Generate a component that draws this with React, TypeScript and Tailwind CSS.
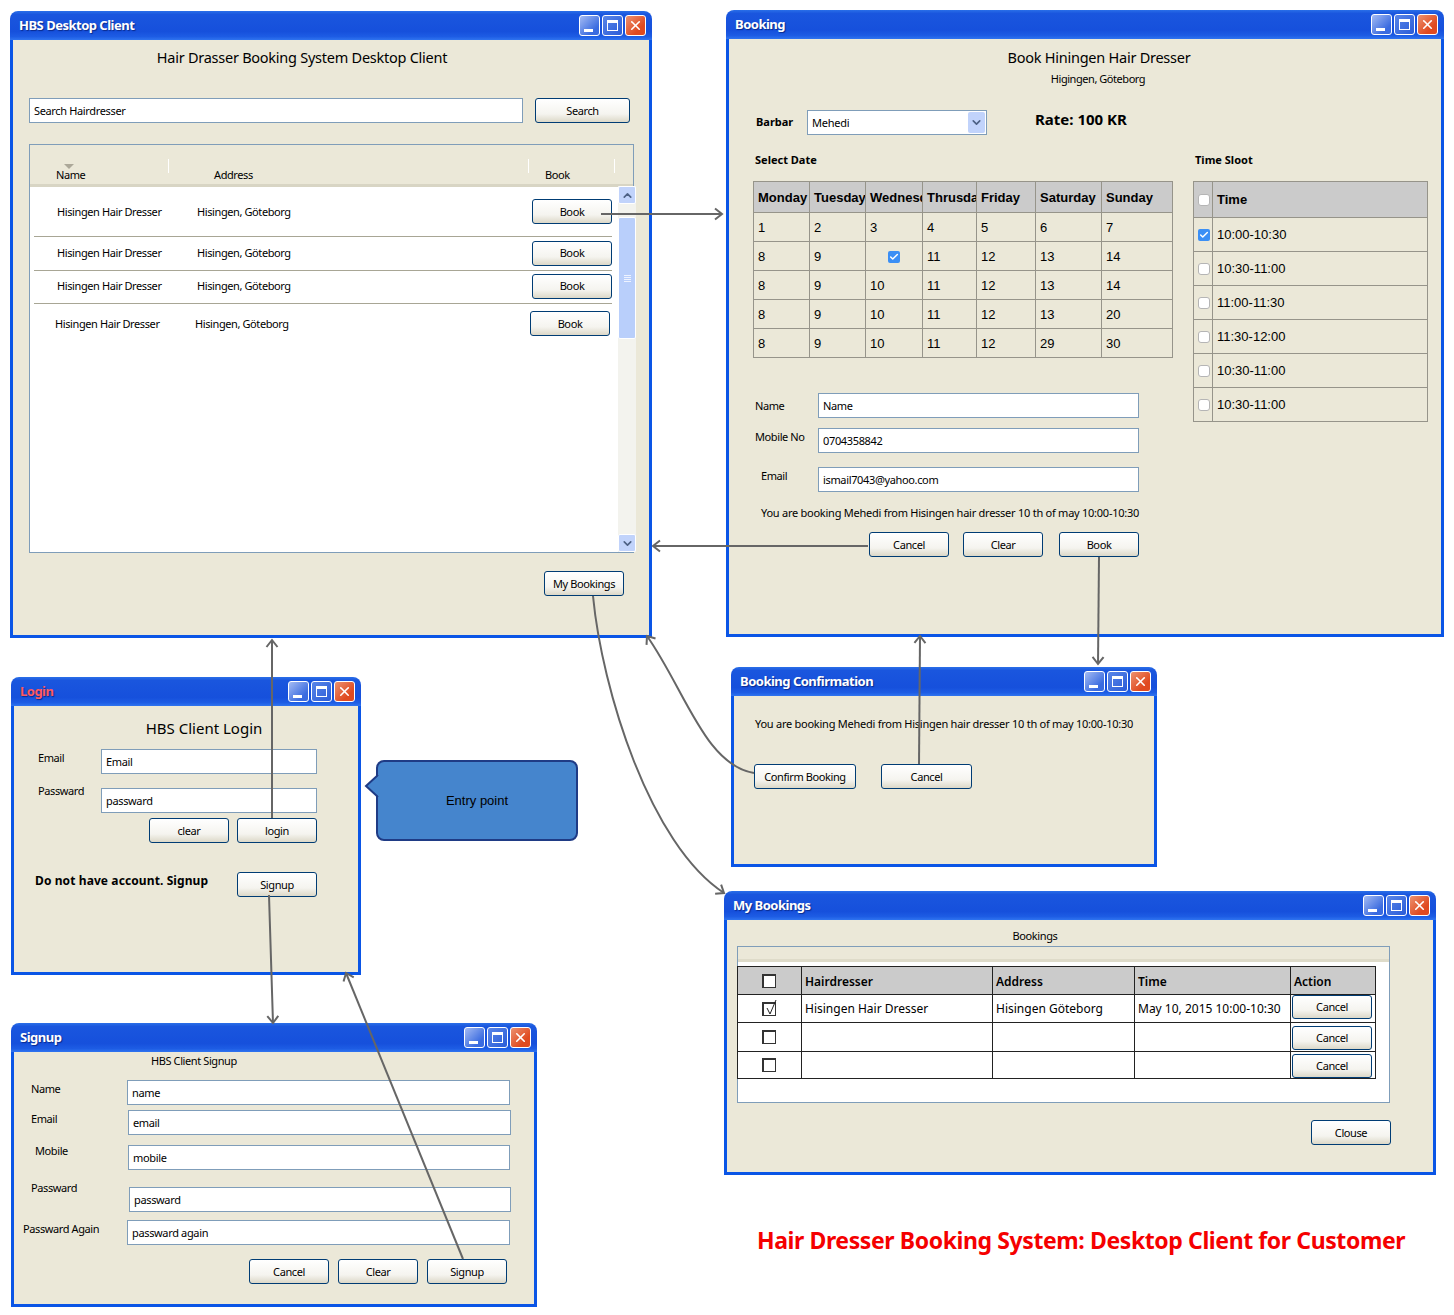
import React from "react";
import { Check, ChevronDown, ChevronUp, X } from "lucide-react";

const Btn = ({ children, className = "w-[80px]" }: { children: React.ReactNode; className?: string }) => (
  <button className={`h-[25px] shrink-0 rounded-[3px] border border-[#003c74] bg-[linear-gradient(180deg,#fff,#f5f4ef_65%,#dcd8c8)] pt-px text-[11px] tracking-[-0.4px] text-black ${className}`}>
    {children}
  </button>
);

const Field = ({ value, className = "" }: { value: string; className?: string }) => (
  <input
    readOnly
    value={value}
    className={`h-[25px] shrink-0 border border-[#7f9db9] bg-white pl-[4px] text-[11px] tracking-[-0.35px] text-black outline-none ${className}`}
  />
);

const Window = ({
  title,
  className,
  titleClass = "text-white",
  children,
}: {
  title: string;
  className: string;
  titleClass?: string;
  children: React.ReactNode;
}) => (
  <section className={`absolute flex flex-col ${className}`}>
    <header className="flex h-[29px] shrink-0 items-center rounded-t-[8px] bg-[linear-gradient(180deg,#2a6fe8_0%,#1a56de_12%,#1650dc_70%,#1d5ce4_88%,#2f74f0_100%)] pl-[9px] pr-[6px]">
      <span className={`text-[13px] font-bold tracking-[-0.5px] [text-shadow:1px_1px_1px_#0a2a8c] ${titleClass}`}>{title}</span>
      <div className="ml-auto flex gap-[2px]">
        <span className="relative h-[21px] w-[21px] rounded-[3px] border border-white bg-[linear-gradient(135deg,#a4bbf3,#3a6be0_75%)]">
          <span className="absolute bottom-[3px] left-[4px] h-[3px] w-[9px] bg-white" />
        </span>
        <span className="flex h-[21px] w-[21px] items-center justify-center rounded-[3px] border border-white bg-[linear-gradient(135deg,#5a86e8,#2a5cd8)]">
          <span className="h-[11px] w-[11px] border border-t-[3px] border-white" />
        </span>
        <span className="flex h-[21px] w-[21px] items-center justify-center rounded-[3px] border border-white bg-[linear-gradient(135deg,#ec9270,#e04a20_70%)]">
          <X size={15} strokeWidth={2.6} className="text-white" />
        </span>
      </div>
    </header>
    <div className="flex min-h-0 flex-1 flex-col border-x-[3px] border-b-[3px] border-[#0a55e6] bg-[#ebe8d8]">{children}</div>
  </section>
);

const Tick = ({ checked = false }: { checked?: boolean }) =>
  checked ? (
    <span className="flex h-[12px] w-[12px] items-center justify-center rounded-[2px] bg-[#3b8ff5]">
      <Check size={10} strokeWidth={3.5} className="text-white" />
    </span>
  ) : (
    <span className="h-[12px] w-[12px] rounded-[3px] border border-[#b5b5b5] bg-white" />
  );

const Row = ({ className }: { className: string }) => (
  <div className={`flex w-[578px] items-center text-[11px] tracking-[-0.4px] ${className}`}>
    <span className="w-[163px] shrink-0 pl-[23px] pt-px">Hisingen Hair Dresser</span>
    <span className="pt-px">Hisingen, Göteborg</span>
    <Btn className="ml-auto w-[80px]">Book</Btn>
  </div>
);

const MainWindow = () => (
  <Window title="HBS Desktop Client" className="left-[10px] top-[11px] h-[627px] w-[642px]">
    <h1 className="mt-[7px] h-[20px] w-[578px] text-center text-[14.5px] leading-[20px]">Hair Drasser Booking System Desktop Client</h1>
    <div className="ml-[16px] mt-[31px] flex gap-[12px]">
      <Field value="Search Hairdresser" className="w-[494px]" />
      <Btn className="w-[95px]">Search</Btn>
    </div>
    <div className="relative ml-[16px] mt-[21px] h-[409px] w-[605px] border border-[#7f9db9] bg-white">
      <div className="relative h-[42px] border-b-[3px] border-[#d8d5c4] bg-[#ebe8d8] text-[11px] tracking-[-0.4px]">
        <span className="absolute left-[34px] top-[19px] border-x-[5px] border-t-[5px] border-x-transparent border-t-[#aca899]" />
        <span className="absolute left-[26px] top-[22px]">Name</span>
        <span className="absolute left-[138px] top-[14px] h-[14px] w-px bg-white" />
        <span className="absolute left-[184px] top-[22px]">Address</span>
        <span className="absolute left-[498px] top-[14px] h-[14px] w-px bg-white" />
        <span className="absolute left-[515px] top-[22px]">Book</span>
        <span className="absolute left-[584px] top-[14px] h-[14px] w-px bg-white" />
      </div>
      <Row className="ml-[4px] h-[50px] border-b border-[#a8a695]" />
      <Row className="ml-[4px] h-[34px] border-b border-[#a8a695] pb-px" />
      <Row className="ml-[4px] h-[33px] border-b border-[#a8a695] pb-[2px]" />
      <Row className="ml-[2px] h-[40px] pb-px" />
      <div className="absolute -right-[3px] bottom-0 top-[41px] flex w-[18px] flex-col bg-[#f3f3ee]">
        <span className="flex h-[18px] items-center justify-center rounded-[2px] border border-white bg-[#c1d3fb]">
          <ChevronUp size={13} strokeWidth={3} className="text-[#4d6185]" />
        </span>
        <span className="mt-[13px] flex h-[122px] flex-col items-center justify-center gap-px rounded-[2px] border border-white bg-[#b9cffb]">
          <span className="h-px w-[7px] bg-[#eef3ff]" />
          <span className="h-px w-[7px] bg-[#eef3ff]" />
          <span className="h-px w-[7px] bg-[#eef3ff]" />
          <span className="h-px w-[7px] bg-[#eef3ff]" />
        </span>
        <span className="mt-auto flex h-[18px] items-center justify-center rounded-[2px] border border-white bg-[#c1d3fb]">
          <ChevronDown size={13} strokeWidth={3} className="text-[#4d6185]" />
        </span>
      </div>
    </div>
    <Btn className="ml-[531px] mt-[18px] w-[80px]">My Bookings</Btn>
  </Window>
);

const calendar = [
  ["1", "2", "3", "4", "5", "6", "7"],
  ["8", "9", "", "11", "12", "13", "14"],
  ["8", "9", "10", "11", "12", "13", "14"],
  ["8", "9", "10", "11", "12", "13", "20"],
  ["8", "9", "10", "11", "12", "29", "30"],
];
const days = ["Monday", "Tuesday", "Wednesday", "Thrusday", "Friday", "Saturday", "Sunday"];
const slots = ["10:00-10:30", "10:30-11:00", "11:00-11:30", "11:30-12:00", "10:30-11:00", "10:30-11:00"];

const BookingWindow = () => (
  <Window title="Booking" className="left-[726px] top-[10px] h-[627px] w-[718px]">
    <h1 className="ml-[28px] mt-[8px] h-[20px] text-center text-[14.5px] leading-[20px]">Book Hiningen Hair Dresser</h1>
    <p className="ml-[26px] mt-[4px] h-[16px] text-center text-[11px] leading-[16px] tracking-[-0.45px]">Higingen, Göteborg</p>
    <div className="ml-[27px] mt-[23px] flex h-[25px] items-center">
      <span className="w-[51px] text-[11px] font-bold tracking-normal">Barbar</span>
      <div className="flex h-[25px] w-[180px] items-center justify-between border border-[#7f9db9] bg-white pl-[4px] pr-px text-[11px]">
        <span className="pt-px">Mehedi</span>
        <span className="flex h-[21px] w-[17px] items-center justify-center rounded-[2px] bg-[#c1d3fb]">
          <ChevronDown size={13} strokeWidth={3} className="text-[#4d6185]" />
        </span>
      </div>
      <span className="-mt-[6px] ml-[48px] text-[15px] font-bold tracking-normal">Rate: 100 KR</span>
    </div>
    <div className="ml-[24px] mt-[17px] flex gap-[20px]">
      <div className="w-[420px]">
        <h2 className="ml-[2px] h-[16px] text-[11px] font-bold leading-[16px] tracking-normal">Select Date</h2>
        <table className="mt-[13px] w-[419px] table-fixed border-collapse font-['Liberation_Sans',Arial,sans-serif] text-[13px] tracking-normal">
          <colgroup>
            <col className="w-[56px]" />
            <col className="w-[56px]" />
            <col className="w-[57px]" />
            <col className="w-[54px]" />
            <col className="w-[59px]" />
            <col className="w-[66px]" />
            <col className="w-[71px]" />
          </colgroup>
          <thead>
            <tr className="h-[31px] bg-[#cbcbcb]">
              {days.map((d) => (
                <th key={d} className="overflow-hidden whitespace-nowrap border border-[#96948a] pl-[4px] pt-px text-left font-bold">
                  {d}
                </th>
              ))}
            </tr>
          </thead>
          <tbody>
            {calendar.map((row, i) => (
              <tr key={i} className="h-[29px]">
                {row.map((c, j) => (
                  <td key={j} className="border border-[#96948a] pl-[4px] pt-px">
                    {c === "" ? (
                      <span className="flex justify-center pr-[4px]">
                        <Tick checked />
                      </span>
                    ) : (
                      c
                    )}
                  </td>
                ))}
              </tr>
            ))}
          </tbody>
        </table>
        <div className="mt-[35px] flex items-start text-[11px] tracking-[-0.4px]">
          <span className="ml-[2px] mt-[5px] w-[63px] shrink-0">Name</span>
          <Field value="Name" className="w-[321px]" />
        </div>
        <div className="mt-[10px] flex items-start text-[11px] tracking-[-0.4px]">
          <span className="ml-[2px] mt-px w-[63px] shrink-0">Mobile No</span>
          <Field value="0704358842" className="w-[321px]" />
        </div>
        <div className="mt-[14px] flex items-start text-[11px] tracking-[-0.4px]">
          <span className="ml-[8px] mt-px w-[57px] shrink-0">Email</span>
          <Field value="ismail7043@yahoo.com" className="w-[321px]" />
        </div>
        <p className="ml-[8px] mt-[13px] h-[16px] whitespace-nowrap text-[11px] leading-[16px]">
          You are booking Mehedi from Hisingen hair dresser 10 th of may 10:00-10:30
        </p>
        <div className="ml-[116px] mt-[11px] flex">
          <Btn>Cancel</Btn>
          <Btn className="ml-[14px] w-[80px]">Clear</Btn>
          <Btn className="ml-[16px] w-[80px]">Book</Btn>
        </div>
      </div>
      <div className="w-[235px]">
        <h2 className="ml-[2px] h-[16px] text-[11px] font-bold leading-[16px] tracking-normal">Time Sloot</h2>
        <table className="mt-[13px] w-[235px] table-fixed border-collapse font-['Liberation_Sans',Arial,sans-serif] text-[13px] tracking-normal">
          <colgroup>
            <col className="w-[19px]" />
            <col />
          </colgroup>
          <thead>
            <tr className="h-[36px] bg-[#cbcbcb]">
              <th className="border border-[#96948a]">
                <span className="flex justify-center pl-[2px]">
                  <Tick />
                </span>
              </th>
              <th className="border border-[#96948a] pl-[4px] text-left font-bold">Time</th>
            </tr>
          </thead>
          <tbody>
            {slots.map((s, i) => (
              <tr key={i} className="h-[34px]">
                <td className="border border-[#96948a]">
                  <span className="flex justify-center pl-[2px]">
                    <Tick checked={i === 0} />
                  </span>
                </td>
                <td className="border border-[#96948a] pl-[4px]">{s}</td>
              </tr>
            ))}
          </tbody>
        </table>
      </div>
    </div>
  </Window>
);

const LoginWindow = () => (
  <Window title="Login" titleClass="text-[#ff5a60]" className="left-[11px] top-[677px] h-[298px] w-[350px]">
    <h1 className="mt-[12px] h-[20px] pl-[36px] text-center text-[15px] leading-[20px] tracking-normal">HBS Client Login</h1>
    <div className="ml-[24px] mt-[11px] flex items-start text-[11px] tracking-[-0.4px]">
      <span className="mt-px w-[63px]">Email</span>
      <Field value="Email" className="w-[216px]" />
    </div>
    <div className="ml-[24px] mt-[9px] flex items-start text-[11px] tracking-[-0.4px]">
      <span className="w-[63px]">Passward</span>
      <Field value="passward" className="mt-[5px] w-[216px]" />
    </div>
    <div className="ml-[135px] mt-[5px] flex gap-[8px]">
      <Btn>clear</Btn>
      <Btn>login</Btn>
    </div>
    <div className="ml-[21px] mt-[29px] flex items-start">
      <span className="w-[202px] text-[12px] font-bold tracking-[0.1px]">Do not have account. Signup</span>
      <Btn>Signup</Btn>
    </div>
  </Window>
);

const ConfirmWindow = () => (
  <Window title="Booking Confirmation" className="left-[731px] top-[667px] h-[200px] w-[426px]">
    <p className="ml-[21px] mt-[20px] h-[16px] whitespace-nowrap text-[11px] leading-[16px]">
      You are booking Mehedi from Hisingen hair dresser 10 th of may 10:00-10:30
    </p>
    <div className="ml-[20px] mt-[32px] flex gap-[25px]">
      <Btn className="w-[102px]">Confirm Booking</Btn>
      <Btn className="w-[91px]">Cancel</Btn>
    </div>
  </Window>
);

const SignupRow = ({
  label,
  value,
  rowClass,
  labelClass,
  inputClass = "",
}: {
  label: string;
  value: string;
  rowClass: string;
  labelClass: string;
  inputClass?: string;
}) => (
  <div className={`flex items-start text-[11px] tracking-[-0.4px] ${rowClass}`}>
    <span className={`shrink-0 ${labelClass}`}>{label}</span>
    <Field value={value} className={inputClass} />
  </div>
);

const SignupWindow = () => (
  <Window title="Signup" className="left-[11px] top-[1023px] h-[284px] w-[526px]">
    <p className="ml-[137px] mt-px h-[16px] text-[11px] leading-[16px] tracking-[-0.4px]">HBS Client Signup</p>
    <SignupRow label="Name" value="name" rowClass="mt-[11px]" labelClass="ml-[17px] mt-px w-[96px]" inputClass="w-[383px]" />
    <SignupRow label="Email" value="email" rowClass="mt-[5px]" labelClass="ml-[17px] mt-px w-[97px]" inputClass="w-[383px]" />
    <SignupRow label="Mobile" value="mobile" rowClass="mt-[8px]" labelClass="ml-[21px] w-[93px]" inputClass="mt-[2px] w-[382px]" />
    <SignupRow label="Passward" value="passward" rowClass="mt-[10px]" labelClass="ml-[17px] w-[98px]" inputClass="mt-[7px] w-[382px]" />
    <SignupRow label="Passward Again" value="passward again" rowClass="mt-[8px]" labelClass="ml-[9px] mt-px w-[104px]" inputClass="w-[383px]" />
    <div className="ml-[235px] mt-[14px] flex gap-[9px]">
      <Btn>Cancel</Btn>
      <Btn>Clear</Btn>
      <Btn>Signup</Btn>
    </div>
  </Window>
);

const bookingRows = [
  { h: "h-[28px]", cell: "align-top", hair: "Hisingen Hair Dresser", addr: "Hisingen Göteborg", time: "May 10, 2015 10:00-10:30", on: true },
  { h: "h-[29px]", cell: "align-top pt-[3px]", hair: "", addr: "", time: "", on: false },
  { h: "h-[27px]", cell: "align-bottom", hair: "", addr: "", time: "", on: false },
];

const SketchBox = ({ on = false }: { on?: boolean }) => (
  <span className="relative mx-auto block h-[14px] w-[14px] -translate-x-px border border-t-2 border-l-2 border-[#333] bg-white">
    {on && (
      <svg className="absolute -top-[5px] left-0 h-[18px] w-[14px]" viewBox="0 0 14 18" fill="none" stroke="#222">
        <path d="M3 9 L6 15 L12 1" />
      </svg>
    )}
  </span>
);

const MyBookingsWindow = () => (
  <Window title="My Bookings" className="left-[724px] top-[891px] h-[284px] w-[712px]">
    <p className="mr-[90px] mt-[8px] h-[16px] text-center text-[11px] leading-[16px] tracking-[-0.4px]">Bookings</p>
    <div className="ml-[10px] mt-[2px] h-[157px] w-[653px] border border-[#7f9db9] bg-white">
      <div className="h-[15px] border-b-[3px] border-[#dedbc9] bg-[#ebe8d8]" />
      <table className="-ml-px mt-[4px] w-[638px] table-fixed border-collapse text-[12px] tracking-normal">
        <colgroup>
          <col className="w-[64px]" />
          <col className="w-[191px]" />
          <col className="w-[142px]" />
          <col className="w-[156px]" />
          <col className="w-[85px]" />
        </colgroup>
        <thead>
          <tr className="h-[28px] bg-[#cbcbcb]">
            <th className="border border-[#222]">
              <SketchBox />
            </th>
            {["Hairdresser", "Address", "Time", "Action"].map((t) => (
              <th key={t} className="border border-[#222] pl-[3px] pt-[2px] text-left font-semibold">
                {t}
              </th>
            ))}
          </tr>
        </thead>
        <tbody>
          {bookingRows.map((r, i) => (
            <tr key={i} className={r.h}>
              <td className="border border-[#222]">
                <SketchBox on={r.on} />
              </td>
              <td className="whitespace-nowrap border border-[#222] pl-[3px]">{r.hair}</td>
              <td className="whitespace-nowrap border border-[#222] pl-[3px]">{r.addr}</td>
              <td className="whitespace-nowrap border border-[#222] pl-[3px]">{r.time}</td>
              <td className={`border border-[#222] px-0 ${r.cell}`}>
                <Btn className="ml-px block !h-[24px] w-[80px]">Cancel</Btn>
              </td>
            </tr>
          ))}
        </tbody>
      </table>
    </div>
    <Btn className="ml-[584px] mt-[17px] w-[80px]">Clouse</Btn>
  </Window>
);

const Arrows = () => (
  <svg className="pointer-events-none absolute inset-0 h-[1315px] w-[1454px]" viewBox="0 0 1454 1315" fill="none" stroke="#666" strokeWidth="2">
    <defs>
      <marker id="open" markerUnits="userSpaceOnUse" markerWidth="14" markerHeight="14" refX="11" refY="7" orient="auto">
        <path d="M4 1.5 L11 7 L4 12.5" fill="none" stroke="#666" strokeWidth="2" />
      </marker>
    </defs>
    <path d="M601 214 H722" markerEnd="url(#open)" />
    <path d="M868 546 H653" markerEnd="url(#open)" />
    <path d="M1099 557 L1098 664" markerEnd="url(#open)" />
    <path d="M272 818 V640" markerEnd="url(#open)" />
    <path d="M593 596 C 602 690, 650 845, 724 893" markerEnd="url(#open)" />
    <path d="M754 773 C 705 765, 685 690, 647 636" markerEnd="url(#open)" />
    <path d="M919 764 L920 636" markerEnd="url(#open)" />
    <path d="M269 895 L273 1023" markerEnd="url(#open)" />
    <path d="M463 1259 L346 973" markerEnd="url(#open)" />
  </svg>
);

export default function App() {
  return (
    <div className="relative h-[1315px] w-[1454px] overflow-hidden bg-white font-['Noto_Sans',Tahoma,sans-serif] tracking-[-0.25px] text-black">
      <MainWindow />
      <BookingWindow />
      <LoginWindow />
      <ConfirmWindow />
      <SignupWindow />
      <MyBookingsWindow />
      <div className="absolute left-[376px] top-[760px] flex h-[81px] w-[202px] items-center justify-center rounded-[8px] border-2 border-[#1f3b85] bg-[#4585cd] font-['Liberation_Sans',Arial,sans-serif] text-[13px] tracking-normal">
        Entry point
        <svg className="absolute -left-[14px] top-[11px] h-[26px] w-[16px]" viewBox="0 0 16 26">
          <path d="M14 2 L2 13 L14 24" fill="#4585cd" stroke="#1f3b85" strokeWidth="2" />
          <rect x="14" y="3" width="2" height="20" fill="#4585cd" />
        </svg>
      </div>
      <Arrows />
      <p className="absolute left-[757px] top-[1223px] whitespace-nowrap text-[23px] font-bold tracking-[-0.4px] text-[#f50000]">
        Hair Dresser Booking System: Desktop Client for Customer
      </p>
    </div>
  );
}
